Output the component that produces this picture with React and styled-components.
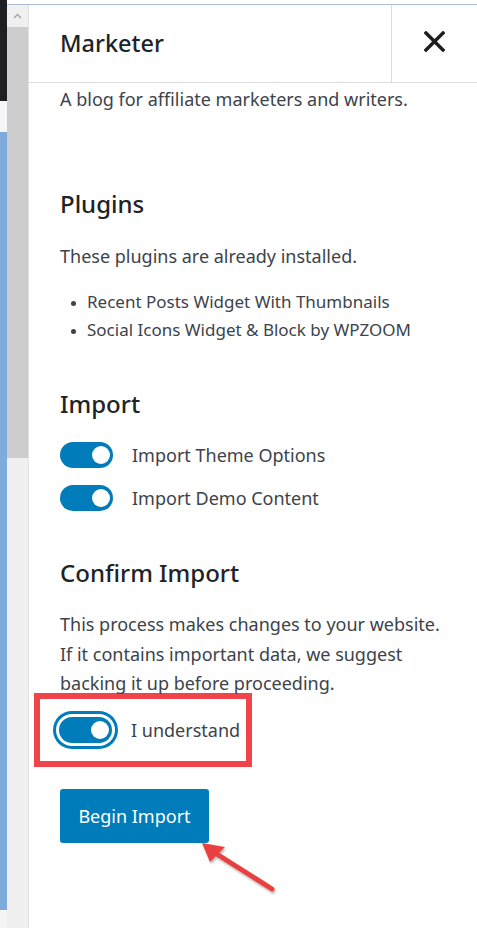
import styled, { createGlobalStyle } from "styled-components";

const GlobalStyle = createGlobalStyle`
  html, body { margin: 0; padding: 0; background: #fff; }
  body { font-family: "Noto Sans", "Open Sans", sans-serif; }
  * { box-sizing: border-box; }
`;

const Screen = styled.div`
  position: relative;
  display: flex;
  width: 477px;
  height: 928px;
  overflow: hidden;
  background: #fff;
`;

const BackPage = styled.div`
  width: 7px;
  display: flex;
  flex-direction: column;
  flex-shrink: 0;
`;

const BackStrip = styled.div`
  height: ${(p) => p.$h}px;
  flex: ${(p) => (p.$h ? "none" : "1")};
  background: ${(p) => p.$c};
`;

const Window = styled.div`
  flex: 1;
  display: flex;
  flex-direction: column;
  padding-top: 4px;
`;

const WindowBody = styled.div`
  flex: 1;
  display: flex;
  border-top: 1px solid #abbdd0;
`;

const Scrollbar = styled.div`
  width: 22px;
  display: flex;
  flex-direction: column;
  background: #f0f0f0;
  border-right: 1px solid #e2e2e2;
`;

const ScrollArrow = styled.div`
  height: 22px;
  display: flex;
  align-items: center;
  justify-content: center;
`;

const ScrollThumb = styled.div`
  height: 431px;
  background: #cdcdcd;
`;

const Panel = styled.div`
  flex: 1;
  display: flex;
  flex-direction: column;
`;

const Header = styled.div`
  height: 78px;
  display: flex;
  align-items: stretch;
  border-bottom: 1px solid #dcdcde;
`;

const Title = styled.h1`
  flex: 1;
  margin: 0;
  padding-left: 31px;
  display: flex;
  align-items: center;
  font-size: 23.5px;
  font-weight: 500;
  color: #1d2327;
  padding-bottom: 1px;
`;

const CloseButton = styled.button`
  width: 86px;
  border: none;
  border-left: 1px solid #dcdcde;
  background: transparent;
  display: flex;
  align-items: center;
  justify-content: center;
  padding: 0 0 5px 0;
  cursor: pointer;
`;

const Content = styled.div`
  padding: 2px 31px 0 31px;
  color: #3c434a;
`;

const Text = styled.p`
  margin: ${(p) => p.$mt || 0}px 0 0 0;
  font-size: 18px;
  line-height: 29.5px;
`;

const Heading = styled.h2`
  margin: ${(p) => p.$mt}px 0 0 0;
  font-size: 24px;
  line-height: 32px;
  font-weight: 500;
  color: #1d2327;
`;

const PluginList = styled.ul`
  margin: 17px 0 0 0;
  padding-left: 27px;
  font-size: 17px;
  line-height: 28px;
  li::marker { color: #3c434a; font-size: 13px; }
`;

const ToggleList = styled.div`
  margin-top: 22px;
  display: flex;
  flex-direction: column;
  gap: 17px;
`;

const ToggleRow = styled.label`
  display: flex;
  align-items: center;
  gap: 19px;
  font-size: 18px;
  color: #3c434a;
`;

const Toggle = styled.span`
  position: relative;
  width: 53px;
  height: 26px;
  border-radius: 13px;
  background: #007cba;
  flex-shrink: 0;
  box-shadow: ${(p) =>
    p.$focused ? "0 0 0 3px #fff, 0 0 0 6px #007cba" : "none"};

  &::after {
    content: "";
    position: absolute;
    right: 3px;
    top: 4px;
    width: 18px;
    height: 18px;
    border-radius: 50%;
    background: #fff;
  }
`;

const Highlight = styled.div`
  margin: -6px 0 0 -26px;
  width: 218px;
  height: 74px;
  border: 6px solid #f0434a;
  display: flex;
  align-items: center;
  padding-left: 19px;
`;

const ImportButton = styled.button`
  margin-top: 22px;
  height: 54px;
  width: 149px;
  border: none;
  border-radius: 3px;
  background: #007cba;
  color: #fff;
  font-family: inherit;
  font-size: 18px;
  cursor: pointer;
`;

const Arrow = styled.svg`
  position: absolute;
  left: 190px;
  top: 832px;
  overflow: visible;
`;

export default function App() {
  return (
    <>
      <GlobalStyle />
      <Screen>
        <BackPage>
          <BackStrip $h={101} $c="#1d1f22" />
          <BackStrip $h={31} $c="#f4f6f9" />
          <BackStrip $h={778} $c="#7eaadc" />
          <BackStrip $c="#f5f5f5" />
        </BackPage>
        <Window>
          <WindowBody>
            <Scrollbar>
              <ScrollArrow>
                <svg width="9" height="6" viewBox="0 0 9 6">
                  <path d="M1 5 L4.5 1.5 L8 5" fill="none" stroke="#a6a6a6" strokeWidth="1.5" />
                </svg>
              </ScrollArrow>
              <ScrollThumb />
            </Scrollbar>
            <Panel>
              <Header>
                <Title>Marketer</Title>
                <CloseButton aria-label="Close">
                  <svg width="21" height="21" viewBox="0 0 21 21">
                    <path d="M2 2 L19 19 M19 2 L2 19" stroke="#1e1e1e" strokeWidth="3.4" strokeLinecap="square" />
                  </svg>
                </CloseButton>
              </Header>
              <Content>
                <Text>A blog for affiliate marketers and writers.</Text>

                <Heading $mt={73}>Plugins</Heading>
                <Text $mt={22}>These plugins are already installed.</Text>
                <PluginList>
                  <li>Recent Posts Widget With Thumbnails</li>
                  <li>Social Icons Widget &amp; Block by WPZOOM</li>
                </PluginList>

                <Heading $mt={44}>Import</Heading>
                <ToggleList>
                  <ToggleRow>
                    <Toggle />
                    Import Theme Options
                  </ToggleRow>
                  <ToggleRow>
                    <Toggle />
                    Import Demo Content
                  </ToggleRow>
                </ToggleList>

                <Heading $mt={46}>Confirm Import</Heading>
                <Text $mt={21}>
                  This process makes changes to your website.
                  <br />
                  If it contains important data, we suggest
                  <br />
                  backing it up before proceeding.
                </Text>
                <Highlight>
                  <ToggleRow>
                    <Toggle $focused />
                    I understand
                  </ToggleRow>
                </Highlight>
                <ImportButton>Begin Import</ImportButton>
              </Content>
            </Panel>
          </WindowBody>
        </Window>
        <Arrow width="90" height="64" viewBox="0 0 90 64">
          <defs>
            <filter id="sh" x="-20%" y="-20%" width="140%" height="140%">
              <feDropShadow dx="1" dy="2" stdDeviation="1.2" floodColor="#000" floodOpacity="0.3" />
            </filter>
          </defs>
          <g filter="url(#sh)">
            <path d="M82 57 L22 19" stroke="#e8413f" strokeWidth="5" strokeLinecap="round" />
            <path d="M12 11 L35 15 L20 30 Z" fill="#e8413f" />
          </g>
        </Arrow>
      </Screen>
    </>
  );
}
